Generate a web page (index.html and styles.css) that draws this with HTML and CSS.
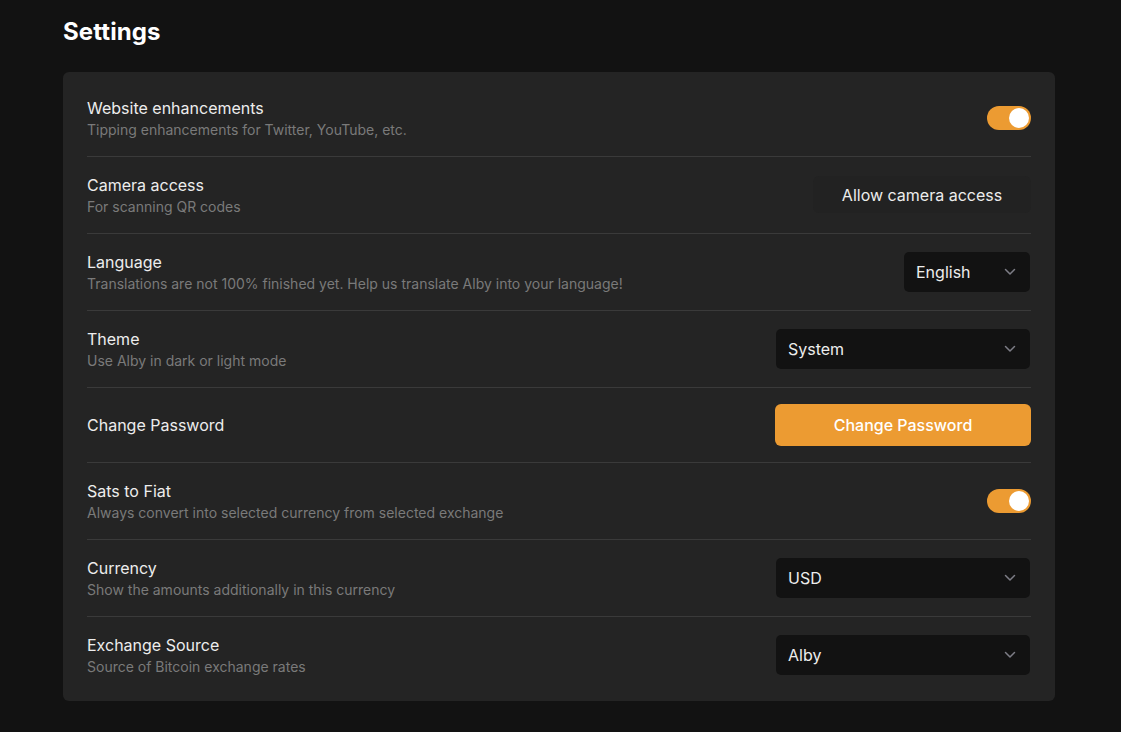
FILE: index.html
```html
<!DOCTYPE html>
<html>
<head>
<meta charset="utf-8">
<link rel="stylesheet" href="styles.css">
</head>
<body>
<div class="page">
  <h1 class="title">Settings</h1>
  <div class="card">
    <div class="row">
      <div class="info"><div class="label">Website enhancements</div><div class="desc">Tipping enhancements for Twitter, YouTube, etc.</div></div>
      <div class="toggle"><span class="knob"></span></div>
    </div>
    <div class="row">
      <div class="info"><div class="label">Camera access</div><div class="desc">For scanning QR codes</div></div>
      <button class="ghost">Allow camera access</button>
    </div>
    <div class="row">
      <div class="info"><div class="label">Language</div><div class="desc">Translations are not 100% finished yet. Help us translate Alby into your language!</div></div>
      <div class="select small"><span>English</span><svg class="chev" viewBox="0 0 20 20" width="20" height="20"><path d="M5.5 7.5l4.5 4.5 4.5-4.5" fill="none" stroke="currentColor" stroke-width="1.5" stroke-linecap="round" stroke-linejoin="round"/></svg></div>
    </div>
    <div class="row">
      <div class="info"><div class="label">Theme</div><div class="desc">Use Alby in dark or light mode</div></div>
      <div class="select"><span>System</span><svg class="chev" viewBox="0 0 20 20" width="20" height="20"><path d="M5.5 7.5l4.5 4.5 4.5-4.5" fill="none" stroke="currentColor" stroke-width="1.5" stroke-linecap="round" stroke-linejoin="round"/></svg></div>
    </div>
    <div class="row slim">
      <div class="info"><div class="label">Change Password</div></div>
      <button class="primary">Change Password</button>
    </div>
    <div class="row">
      <div class="info"><div class="label">Sats to Fiat</div><div class="desc">Always convert into selected currency from selected exchange</div></div>
      <div class="toggle"><span class="knob"></span></div>
    </div>
    <div class="row">
      <div class="info"><div class="label">Currency</div><div class="desc">Show the amounts additionally in this currency</div></div>
      <div class="select"><span>USD</span><svg class="chev" viewBox="0 0 20 20" width="20" height="20"><path d="M5.5 7.5l4.5 4.5 4.5-4.5" fill="none" stroke="currentColor" stroke-width="1.5" stroke-linecap="round" stroke-linejoin="round"/></svg></div>
    </div>
    <div class="row last">
      <div class="info"><div class="label">Exchange Source</div><div class="desc">Source of Bitcoin exchange rates</div></div>
      <div class="select"><span>Alby</span><svg class="chev" viewBox="0 0 20 20" width="20" height="20"><path d="M5.5 7.5l4.5 4.5 4.5-4.5" fill="none" stroke="currentColor" stroke-width="1.5" stroke-linecap="round" stroke-linejoin="round"/></svg></div>
    </div>
  </div>
</div>
</body>
</html>
```
FILE: styles.css
```css
* { box-sizing: border-box; }
html, body { margin: 0; padding: 0; }
body {
  background: #121212;
  font-family: Inter, "Noto Sans", sans-serif;
  color: #ededed;
  height: 732px;
  overflow: hidden;
}
.page {
  width: 992px;
  margin-left: 63px;
  padding-top: 16px;
}
.title {
  margin: 0 0 24px 0;
  font-size: 24px;
  line-height: 32px;
  font-weight: 700;
  letter-spacing: 0.1px;
  color: #fff;
}
.card {
  background: #242424;
  border-radius: 6px;
  padding: 8px 24px;
}
.row {
  display: flex;
  align-items: center;
  justify-content: space-between;
  padding: 16px 0;
  border-bottom: 1px solid #3a3a3a;
}
.row.last { border-bottom: none; }
.label {
  font-size: 16px;
  line-height: 24px;
  font-weight: 400;
  color: #ededed;
}
.desc {
  font-size: 14px;
  line-height: 20px;
  color: #7a7a7a;
}
.toggle {
  width: 44px;
  height: 24px;
  border-radius: 12px;
  background: #ec9b32;
  display: flex;
  align-items: center;
  justify-content: flex-end;
  padding: 2px;
}
.knob {
  width: 20px;
  height: 20px;
  border-radius: 50%;
  background: #fff;
}
button {
  font-family: inherit;
  border: none;
  cursor: pointer;
}
.ghost {
  background: #222222;
  color: #ededed;
  font-size: 16px;
  font-weight: 400;
  height: 37px;
  width: 218px;
  padding: 0;
  border-radius: 6px;
  margin-top: 3px;
  margin-bottom: 4px;
}
.primary {
  background: #ec9b32;
  color: #fff;
  font-size: 16px;
  font-weight: 500;
  width: 256px;
  height: 42px;
  border-radius: 6px;
}
.select {
  width: 254px;
  height: 40px;
  background: #121212;
  border-radius: 5px;
  display: flex;
  align-items: center;
  justify-content: space-between;
  padding: 0 10px 0 12px;
  font-size: 16px;
  color: #ededed;
  margin: 2px 1px 2px 0;
}
.select.small { width: 126px; }
.chev { color: #7d7d86; }
```
